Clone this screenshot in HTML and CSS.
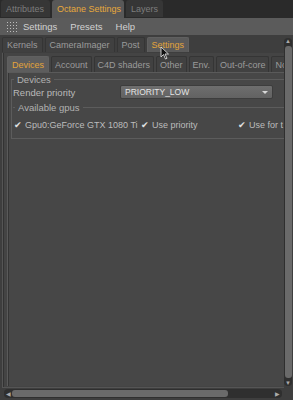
FILE: index.html
```html
<!DOCTYPE html>
<html lang="en">
<head>
    <meta charset="UTF-8">
    <title>Octane Settings</title>
    <link rel="stylesheet" href="styles.css">
</head>
<body>
    <div class="top-tabs">
        <div class="tab dark">Attributes</div>
        <div class="tab current">Octane Settings</div>
        <div class="tab dark">Layers</div>
    </div>

    <div class="menubar">
        <svg class="grip" width="10" height="10" viewBox="0 0 10 10">
            <g fill="#bdbdbd">
                <rect x="0" y="0" width="1" height="1"/><rect x="3" y="0" width="1" height="1"/><rect x="6" y="0" width="1" height="1"/><rect x="9" y="0" width="1" height="1"/>
                <rect x="0" y="3" width="1" height="1"/><rect x="3" y="3" width="1" height="1"/><rect x="6" y="3" width="1" height="1"/><rect x="9" y="3" width="1" height="1"/>
                <rect x="0" y="6" width="1" height="1"/><rect x="3" y="6" width="1" height="1"/><rect x="6" y="6" width="1" height="1"/><rect x="9" y="6" width="1" height="1"/>
                <rect x="0" y="9" width="1" height="1"/><rect x="3" y="9" width="1" height="1"/><rect x="6" y="9" width="1" height="1"/><rect x="9" y="9" width="1" height="1"/>
            </g>
        </svg>
        <span class="menu-item">Settings</span>
        <span class="menu-item">Presets</span>
        <span class="menu-item">Help</span>
    </div>

    <div class="main">
        <div class="content">
            <div class="sub-tabs outer-tabs">
                <div class="tab">Kernels</div>
                <div class="tab">CameraImager</div>
                <div class="tab">Post</div>
                <div class="tab current">Settings
                    <svg class="cursor" width="10" height="14" viewBox="0 0 10 14">
                        <path d="M1 1 L1 11 L3.5 8.5 L5.5 13 L7 12.3 L5 8 L8.5 8 Z" fill="#111" stroke="#eee" stroke-width="0.8"/>
                    </svg>
                </div>
            </div>

            <div class="panel">
                <div class="sub-tabs inner-tabs">
                    <div class="tab current">Devices</div>
                    <div class="tab">Account</div>
                    <div class="tab">C4D shaders</div>
                    <div class="tab">Other</div>
                    <div class="tab">Env.</div>
                    <div class="tab">Out-of-core</div>
                    <div class="tab clipped">No</div>
                </div>

                <div class="page">
                    <fieldset class="group">
                        <legend>Devices</legend>
                        <div class="row">
                            <span class="label">Render priority</span>
                            <div class="dropdown">
                                <span>PRIORITY_LOW</span>
                                <span class="arrow"></span>
                            </div>
                        </div>
                        <fieldset class="group gpus">
                            <legend>Available gpus</legend>
                            <div class="row checks">
                                <span class="check gpu"><span class="tick">✔</span>Gpu0:GeForce GTX 1080 Ti</span>
                                <span class="check prio"><span class="tick">✔</span>Use priority</span>
                                <span class="check use"><span class="tick">✔</span>Use for t</span>
                            </div>
                        </fieldset>
                    </fieldset>
                </div>
            </div>
        </div>

        <div class="vscroll">
            <span class="up">▲</span>
            <div class="vthumb"></div>
            <span class="down">▼</span>
        </div>

        <div class="hscroll">
            <span class="left">◀</span>
            <div class="hthumb"></div>
            <span class="right">▶</span>
        </div>
    </div>
</body>
</html>
```

FILE: styles.css
```css
body {
    margin: 0;
    width: 293px;
    height: 400px;
    overflow: hidden;
    background-color: #2c2c2c;
    font-family: "Liberation Sans", Arial, sans-serif;
    font-size: 9px;
    color: #a9a9a9;
}

/* Abas do topo */
.top-tabs {
    display: flex;
    gap: 2px;
    height: 18px;
    padding-left: 1px;
    background-color: #2a2a2a;
}

.tab {
    display: flex;
    align-items: center;
    padding: 0 5px;
    border-radius: 3px 3px 0 0;
    white-space: nowrap;
}

.top-tabs .tab {
    height: 17px;
    padding: 0 5px 0 5px;
}

.tab.dark {
    background-color: #363636;
    color: #7d7d7d;
}

.top-tabs .tab:first-child {
    width: 39px;
}

.top-tabs .tab.current {
    width: 62px;
    height: 18px;
    background-color: #585858;
    color: #e7a93c;
}

.tab.current {
    color: #e7a93c;
}

/* Menu */
.menubar {
    display: flex;
    align-items: center;
    height: 17px;
    padding-left: 7px;
    background-color: #5b5b5b;
    color: #d2d2d2;
    font-size: 9.5px;
}

.grip {
    margin-right: 6px;
}

.menu-item {
    margin-right: 13px;
}

/* Area principal */
.main {
    display: grid;
    grid-template-columns: 1fr 9px;
    grid-template-rows: 1fr 12px;
    height: 365px;
    background-color: #3e3e3e;
}

.content {
    display: flex;
    flex-direction: column;
    padding: 2px 0 0 2px;
    min-width: 0;
}

.sub-tabs {
    display: flex;
    gap: 2px;
    height: 15px;
}

.sub-tabs .tab {
    flex-shrink: 0;
    background-color: #404040;
    border: 1px solid #353535;
    border-bottom: none;
    color: #9b9b9b;
    padding: 0 3px;
    border-radius: 2px 2px 0 0;
}

.outer-tabs .tab {
    padding: 0 4px;
}

.sub-tabs .tab.current {
    position: relative;
    background-color: #5a5a5a;
    border-color: #606060;
    color: #e2a43a;
}

.cursor {
    position: absolute;
    left: 12px;
    top: 8px;
}

.panel {
    flex: 1;
    display: flex;
    flex-direction: column;
    margin-top: 1px;
    padding: 3px 0 1px 4px;
    border-left: 1px solid #555;
    border-bottom: 1px solid #555;
    box-shadow: inset 1px 0 0 #333;
    background-color: #444;
}

.inner-tabs {
    height: 16px;
    overflow: hidden;
}

.inner-tabs .tab {
    background-color: #414141;
}

.inner-tabs .tab.current {
    padding: 0 4px;
    background-color: #5d5d5d;
}

.inner-tabs .tab.clipped {
    padding-right: 4px;
}

.page {
    flex: 1;
    border-top: 1px solid #5a5a5a;
    border-left: 1px solid #5a5a5a;
    box-shadow: inset 1px 0 0 #353535;
    background-color: #474747;
    padding: 1px 0 0 3px;
}

.group {
    margin: 0;
    padding: 0 0 5px 1px;
    border: none;
    border-top: 1px solid #5c5c5c;
    border-bottom: 1px solid #5c5c5c;
    border-left: 1px solid #5c5c5c;
}

.group legend {
    padding: 0 3px;
    margin-left: 1px;
    color: #b2b2b2;
    font-size: 9.5px;
}

.row {
    display: flex;
    align-items: center;
    height: 14px;
}

.label {
    width: 107px;
    color: #b9b9b9;
    font-size: 9.5px;
}

.dropdown {
    display: flex;
    align-items: center;
    justify-content: space-between;
    width: 143px;
    height: 12px;
    padding: 0 4px;
    border-radius: 2px;
    background: linear-gradient(#6e6e6e, #626262);
    border: 1px solid #3d3d3d;
    color: #e4e4e4;
    font-size: 8.5px;
}

.arrow {
    width: 0;
    height: 0;
    border-left: 3px solid transparent;
    border-right: 3px solid transparent;
    border-top: 3px solid #d8d8d8;
}

.gpus {
    margin: 3px 0 0 0;
    padding: 4px 0 0 1px;
    border-bottom: none;
    border-left: none;
}

.checks {
    height: 16px;
    white-space: nowrap;
    overflow: hidden;
    color: #bcbcbc;
    font-size: 9px;
}

.check {
    display: flex;
    align-items: center;
    flex-shrink: 0;
}

.tick {
    margin-right: 3px;
    color: #e0e0e0;
    font-size: 9px;
}

.gpu {
    width: 127px;
}

.prio {
    width: 97px;
}

/* Barras de rolagem */
.vscroll {
    display: flex;
    flex-direction: column;
    align-items: center;
    margin: 3px 1px 2px 0;
    border-radius: 4px;
    background-color: #2f2f2f;
    font-size: 6px;
    color: #aaa;
}

.vthumb {
    flex: 1;
    width: 7px;
    margin: 2px 0;
    border-radius: 3px;
    background-color: #6a6a6a;
}

.hscroll {
    grid-column: 1 / 3;
    display: flex;
    align-items: center;
    margin: 1px 11px 2px 4px;
    border-radius: 4px;
    background-color: #2f2f2f;
    font-size: 6px;
    color: #aaa;
}

.hscroll .left {
    margin: 0 1px 0 2px;
}

.hthumb {
    width: 216px;
    height: 7px;
    border-radius: 3px;
    background-color: #6a6a6a;
}

.hscroll .right {
    margin-left: auto;
    margin-right: 2px;
}
```
